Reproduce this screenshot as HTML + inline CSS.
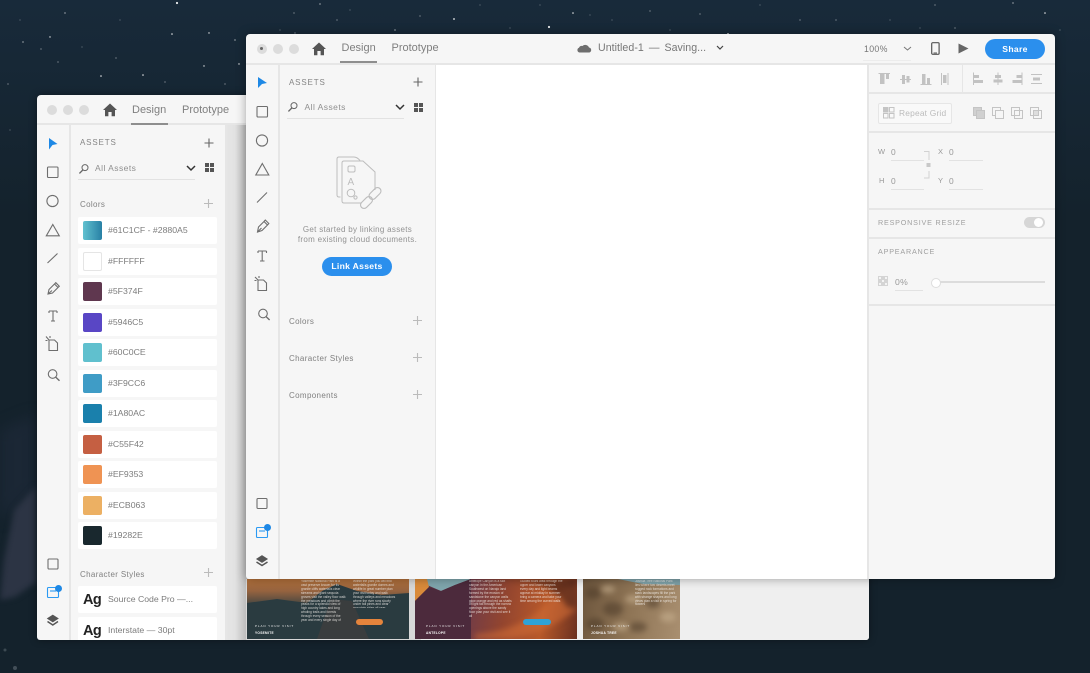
<!DOCTYPE html>
<html><head><meta charset="utf-8">
<style>
html,body{margin:0;padding:0}
body{width:1090px;height:673px;overflow:hidden;position:relative;background:#14222c;font-family:"Liberation Sans",sans-serif;color:#8a8a8a}
.a{position:absolute}
.t{position:absolute;white-space:nowrap;line-height:12px}
svg{position:absolute;overflow:visible}
.win{position:absolute;background:#f6f6f6;border-radius:4px 4px 3px 3px;overflow:hidden}
.dot{position:absolute;width:10px;height:10px;border-radius:50%;background:#dcdcdc}
.row{position:absolute;left:41px;width:139px;height:27px;background:#fff;border-radius:2px}
.sw{position:absolute;left:5px;top:4px;width:19px;height:19px;border-radius:2px}
.row span{position:absolute;left:30px;top:7px;font-size:8.7px;line-height:12px;letter-spacing:0;color:#7c7c7c;white-space:nowrap}
.ag{position:absolute;left:5px;top:5px;font-size:14.5px;line-height:18px;font-weight:bold;letter-spacing:-.6px;color:#222}
.tab{font-size:11px;letter-spacing:0;color:#7f7f7f}
.lb{font-size:8px;letter-spacing:.35px;color:#808080}
.cap{font-size:8px;letter-spacing:.85px;color:#858585}
.p{position:absolute;font-size:3.2px;line-height:3.9px;color:rgba(244,240,236,.8);overflow:hidden}
.l1{position:absolute;font-size:3px;letter-spacing:.9px;color:#eee;white-space:nowrap}
.l2{position:absolute;font-size:3.2px;font-weight:bold;letter-spacing:.3px;color:#fff;white-space:nowrap}
.ln{position:absolute;height:1px;background:#e2e2e2}
.rt{font-size:8.4px;color:#999;letter-spacing:.3px}
</style></head><body>

<svg width="1090" height="673" style="left:0;top:0" fill="#fff">
<defs>
<filter id="b1" color-interpolation-filters="sRGB" x="-30%" y="-30%" width="160%" height="160%"><feGaussianBlur stdDeviation="3"/></filter>
<filter id="b3" color-interpolation-filters="sRGB" x="-30%" y="-30%" width="160%" height="160%"><feGaussianBlur stdDeviation="7"/></filter>
<linearGradient id="top" x1="0" y1="0" x2="0" y2="1"><stop offset="0" stop-color="#182a3a"/><stop offset="1" stop-color="#14222c"/></linearGradient>
</defs>
<rect width="1090" height="220" fill="url(#top)"/>
<path d="M0 430 L36 415 V490 L0 520Z" fill="#1b2735" filter="url(#b3)"/>
<path d="M4 560 L14 510 L36 486 V582 L15 597 L0 600Z" fill="#2c3444" filter="url(#b1)"/>
<g fill="#9aa4ac"><circle cx="5" cy="650" r="1.500" opacity=".3"/><circle cx="15" cy="668" r="2" opacity=".35"/></g>
<g opacity=".9">
<circle cx="177" cy="3" r="1.100"/><circle cx="65" cy="13" r=".6"/><circle cx="50" cy="37" r=".7"/><circle cx="172" cy="34" r=".8"/><circle cx="209" cy="33" r=".7"/><circle cx="235" cy="40" r=".6"/><circle cx="23" cy="42" r=".6"/><circle cx="41" cy="49" r=".5"/><circle cx="58" cy="62" r=".5"/><circle cx="101" cy="76" r=".8"/><circle cx="143" cy="75" r=".8"/><circle cx="204" cy="66" r=".7"/><circle cx="239" cy="64" r=".7"/><circle cx="116" cy="58" r=".5"/><circle cx="82" cy="47" r=".4"/><circle cx="20" cy="20" r=".4"/><circle cx="120" cy="20" r=".4"/><circle cx="8" cy="84" r=".5"/><circle cx="165" cy="82" r=".5"/><circle cx="225" cy="84" r=".5"/><circle cx="10" cy="130" r=".4"/>
<circle cx="454" cy="19" r=".9"/><circle cx="549" cy="27" r="1.100"/><circle cx="573" cy="13" r=".8"/><circle cx="728" cy="34" r=".9"/><circle cx="1045" cy="13" r=".8"/><circle cx="989" cy="45" r=".7"/><circle cx="1013" cy="3" r=".6"/><circle cx="320" cy="4" r=".6"/><circle cx="294" cy="13" r=".5"/><circle cx="420" cy="16" r=".5"/><circle cx="395" cy="30" r=".6"/><circle cx="337" cy="20" r=".5"/><circle cx="280" cy="30" r=".4"/><circle cx="295" cy="33" r=".5"/><circle cx="650" cy="11" r=".5"/><circle cx="700" cy="14" r=".5"/><circle cx="760" cy="5" r=".4"/><circle cx="800" cy="20" r=".5"/><circle cx="836" cy="20" r=".5"/><circle cx="890" cy="20" r=".4"/><circle cx="935" cy="5" r=".5"/><circle cx="955" cy="28" r=".5"/><circle cx="920" cy="28" r=".4"/><circle cx="510" cy="28" r=".4"/><circle cx="612" cy="20" r=".4"/><circle cx="670" cy="30" r=".4"/><circle cx="1060" cy="30" r=".4"/><circle cx="350" cy="10" r=".4"/><circle cx="480" cy="5" r=".4"/><circle cx="540" cy="5" r=".4"/><circle cx="590" cy="15" r=".4"/>
</g>
</svg>

<!-- BACK WINDOW -->
<div class="win" style="left:37px;top:95px;width:832px;height:545px;box-shadow:0 0 8px rgba(0,0,0,.4)">
  <div class="a" style="left:0;top:0;width:832px;height:30px;border-bottom:2px solid #e6e6e6;box-sizing:border-box"></div>
  <div class="dot" style="left:10px;top:10px"></div><div class="dot" style="left:26px;top:10px"></div><div class="dot" style="left:42px;top:10px"></div>
  <svg style="left:66px;top:8px" width="14" height="14" viewBox="0 0 14 14"><path d="M7 .5 L14 7 L12 7 L12 13.200 L8.600 13.200 L8.600 9 L5.400 9 L5.400 13.200 L2 13.200 L2 7 L0 7Z" fill="#555"/></svg>
  <div class="t tab" style="left:95px;top:8.500px">Design</div>
  <div class="a" style="left:94px;top:28px;width:37px;height:2px;background:#8e8e8e"></div>
  <div class="t tab" style="left:145px;top:8.500px">Prototype</div>

  <div class="a" style="left:32px;top:30px;width:2px;height:515px;background:#e6e6e6"></div>
  <div class="a" style="left:34px;top:30px;width:154px;height:515px;background:#f6f6f6"></div>
  <div class="a" style="left:188px;top:30px;width:644px;height:515px;background:linear-gradient(90deg,#e6e6e6 0,#e2e2e2 10px,#bdbdbd 21px,#bdbdbd 22px)"></div>

  <svg style="left:0;top:0" width="33" height="545" fill="none" stroke="#6e6e6e" stroke-width="1.100">
    <path d="M12 43 L20.500 49 L15.500 50 L12 54.500Z" fill="#1e88e5" stroke="none"/>
    <rect x="10.500" y="72" width="10.500" height="10.500" rx="1"/>
    <circle cx="15.500" cy="106" r="5.600"/>
    <path d="M15.800 129.500 L22.300 140.800 L9.300 140.800Z"/>
    <path d="M10.500 168 L20.500 158.500"/>
    <path d="M11 199 L12 194.500 L17.500 189 L21 192.500 L15.500 198 Z M11 199 L15 195.500 M17.500 189 L18.800 187.700 L22.300 191.200 L21 192.500"/>
    <path d="M12 216 H20 M16 216 V226 M14 226 H18 M12 216 V218 M20 216 V218"/>
    <path d="M12 245 H17.500 L20.500 248 V255.500 H12Z M9 241.500 L12 245 M13 241 V243 M8.500 245.500 H10.500"/>
    <circle cx="15.600" cy="279" r="4.300"/><path d="M18.800 282.200 L22.500 285.800" stroke-width="1.400"/>
    <rect x="11" y="464" width="10" height="10" rx="1"/>
    <rect x="10.500" y="492.500" width="11" height="10" rx="1" stroke="#2b9af3"/><path d="M13 496 H19" stroke="#2b9af3"/>
    <path d="M15.800 520 L21.300 523.500 L15.800 527 L10.300 523.500Z" fill="#555" stroke="#555" stroke-width=".6"/><path d="M10.500 526.500 L15.800 530 L21 526.500" stroke="#555" stroke-width="1.500"/>
  </svg>
  <div class="a" style="left:18px;top:490px;width:7px;height:7px;border-radius:50%;background:#1e88e5"></div>

  <div class="t cap" style="left:43px;top:42px">ASSETS</div>
  <svg style="left:167px;top:43px" width="10" height="10"><path d="M5 .5 V9.500 M.5 5 H9.500" stroke="#666" stroke-width="1.100"/></svg>
  <svg style="left:41px;top:68px" width="12" height="12" fill="none" stroke="#666"><circle cx="7" cy="4.600" r="3"/><path d="M4.800 7 L1.400 10.400" stroke-width="1.300"/></svg>
  <div class="t lb" style="left:58px;top:67px;font-size:8.500px;color:#8f8f8f;letter-spacing:.45px">All Assets</div>
  <svg style="left:149px;top:70px" width="10" height="7" fill="none"><path d="M1 1 L5 5 L9 1" stroke="#333" stroke-width="1.500"/></svg>
  <div class="a" style="left:168px;top:68px;width:3.500px;height:3.500px;background:#555;box-shadow:5px 0 #555,0 5px #555,5px 5px #555"></div>
  <div class="ln" style="left:41px;top:84px;width:117px"></div>
  <div class="t lb" style="left:43px;top:104px">Colors</div>
  <svg style="left:167px;top:104px" width="10" height="10"><path d="M4.500 0 V9 M0 4.500 H9" stroke="#bbb" stroke-width="1.100"/></svg>

  <div class="row" style="top:122px"><div class="sw" style="background:linear-gradient(90deg,#61c1cf,#2880a5)"></div><span>#61C1CF - #2880A5</span></div>
  <div class="row" style="top:152.500px"><div class="sw" style="background:#fff;box-shadow:inset 0 0 0 1px #e5e5e5"></div><span>#FFFFFF</span></div>
  <div class="row" style="top:183px"><div class="sw" style="background:#5f374f"></div><span>#5F374F</span></div>
  <div class="row" style="top:213.500px"><div class="sw" style="background:#5946c5"></div><span>#5946C5</span></div>
  <div class="row" style="top:244px"><div class="sw" style="background:#60c0ce"></div><span>#60C0CE</span></div>
  <div class="row" style="top:274.500px"><div class="sw" style="background:#3f9cc6"></div><span>#3F9CC6</span></div>
  <div class="row" style="top:305px"><div class="sw" style="background:#1a80ac"></div><span>#1A80AC</span></div>
  <div class="row" style="top:335.500px"><div class="sw" style="background:#c55f42"></div><span>#C55F42</span></div>
  <div class="row" style="top:366px"><div class="sw" style="background:#ef9353"></div><span>#EF9353</span></div>
  <div class="row" style="top:396.500px"><div class="sw" style="background:#ecb063"></div><span>#ECB063</span></div>
  <div class="row" style="top:427px"><div class="sw" style="background:#19282e"></div><span>#19282E</span></div>

  <div class="t lb" style="left:43px;top:474px">Character Styles</div>
  <svg style="left:167px;top:473px" width="10" height="10"><path d="M4.500 0 V9 M0 4.500 H9" stroke="#bbb" stroke-width="1.100"/></svg>
  <div class="row" style="top:491px"><div class="ag">Ag</div><span>Source Code Pro —...</span></div>
  <div class="row" style="top:521.500px"><div class="ag">Ag</div><span>Interstate — 30pt</span></div>

  <div class="a" style="left:209px;top:484px;width:623px;height:61px;background:#efefef"></div>
  <div class="a" style="left:209px;top:484px;width:175px;height:61px;background:#d8d8d8"></div>
  <div class="a" style="left:210px;top:484px;width:162px;height:60px;overflow:hidden;background:linear-gradient(180deg,#b2703a 0,#96633f 20%,#2c3d42 50%,#22343a 100%)">
    <svg style="left:0;top:0" width="162" height="60"><path d="M0 24 L30 20 L60 24 L75 12 L90 5 L110 12 L135 16 L162 14 V60 H0Z" fill="#2a3b40"/><path d="M70 60 L84 20 L105 22 L122 60Z" fill="#3a3d3e"/></svg>
    <div class="p" style="left:54px;top:1px;width:45px;height:42px">Yosemite National Park is a vast preserve known for its granite cliffs waterfalls clear streams and giant sequoia groves visit the valley floor walk the meadows and climb the peaks for a splendid view of high country lakes and long winding trails and forests through every season of the year and every single day of the long and bright and warm summer when the falls run strong and the trails are open</div>
    <div class="p" style="left:106px;top:1px;width:44px;height:28px">Within the park you will find waterfalls granite domes and wildlife in great number plan your visit today and walk through valleys and meadows where the river runs slowly under tall pines and clear mountain skies all year</div>
    <div class="a" style="left:109px;top:40px;width:27px;height:6px;border-radius:3px;background:#e5843c"></div>
    <div class="l1" style="left:8px;top:45px">PLAN YOUR VISIT</div><div class="l2" style="left:8px;top:52px">YOSEMITE</div>
  </div>
  <div class="a" style="left:378px;top:484px;width:162px;height:60px;overflow:hidden;background:linear-gradient(100deg,#57303f 0,#6b3a4b 30%,#93452f 55%,#b8592a 78%,#6a3020 100%)">
    <svg style="left:0;top:0" width="162" height="60"><path d="M10 0 H56 L40 6 L26 12 L12 6Z" fill="#7fa6ad"/><path d="M0 0 H12 L14 8 L0 22Z" fill="#d98a3a"/><path d="M0 22 L14 8 L26 12 L40 6 L56 0 V60 H0Z" fill="#4c2a3c"/><g filter="url(#b1)"><path d="M60 55 Q110 52 135 20 Q148 8 162 6 V30 Q130 55 95 60 H60Z" fill="#cf6a35" opacity=".6"/><path d="M100 0 Q140 5 152 28 L162 30 V0Z" fill="#4c2418" opacity=".65"/></g></svg>
    <div class="p" style="left:54px;top:1px;width:44px;height:42px">Antelope Canyon is a slot canyon in the American Southwest on Navajo land formed by the erosion of sandstone the canyon walls glow orange and red as shafts of light fall through the narrow openings above the sandy floor plan your visit and see it all</div>
    <div class="p" style="left:105px;top:1px;width:44px;height:28px">Guided tours walk through the upper and lower canyons every day and light beams appear at midday in summer bring a camera and take your time among the curved walls</div>
    <div class="a" style="left:108px;top:40px;width:28px;height:6px;border-radius:3px;background:#2fa2d6"></div>
    <div class="l1" style="left:11px;top:45px">PLAN YOUR VISIT</div><div class="l2" style="left:11px;top:52px">ANTELOPE</div>
  </div>
  <div class="a" style="left:546px;top:484px;width:97px;height:60px;overflow:hidden;background:linear-gradient(100deg,#6d563d 0,#8f7556 50%,#a98f70 100%)">
    <svg style="left:0;top:0" width="97" height="60"><path d="M35 0 H97 V6 L60 5 Z" fill="#7ea1a8"/><g fill="#4d3b29" opacity=".55" filter="url(#b1)"><ellipse cx="10" cy="14" rx="8" ry="6"/><ellipse cx="30" cy="30" rx="10" ry="7"/><ellipse cx="12" cy="45" rx="9" ry="6"/><ellipse cx="55" cy="48" rx="9" ry="5"/><ellipse cx="70" cy="24" rx="7" ry="5"/></g><g fill="#c7b08f" opacity=".6" filter="url(#b1)"><ellipse cx="25" cy="10" rx="7" ry="4"/><ellipse cx="50" cy="20" rx="8" ry="4"/><ellipse cx="85" cy="38" rx="8" ry="5"/><ellipse cx="38" cy="48" rx="8" ry="4"/></g></svg>
    <div class="p" style="left:52px;top:1px;width:43px">Joshua Tree National Park lies where two deserts meet rugged rock formations and stark landscapes fill the park with strange shapes and long views plan a visit in spring for flowers</div>
    <div class="l1" style="left:8px;top:45px">PLAN YOUR VISIT</div><div class="l2" style="left:8px;top:52px">JOSHUA TREE</div>
  </div>
</div>

<!-- FRONT WINDOW -->
<div class="win" style="left:246px;top:34px;width:809px;height:545px;box-shadow:0 0 10px rgba(0,0,0,.35)">
  <div class="a" style="left:0;top:0;width:809px;height:31px;border-bottom:2px solid #e6e6e6;box-sizing:border-box"></div>
  <div class="dot" style="left:10.500px;top:9.500px"></div><div class="dot" style="left:26.500px;top:9.500px"></div><div class="dot" style="left:42.500px;top:9.500px"></div>
  <div class="a" style="left:14px;top:13px;width:3px;height:3px;border-radius:50%;background:#666"></div>
  <svg style="left:66px;top:8px" width="14" height="14" viewBox="0 0 14 14"><path d="M7 .5 L14 7 L12 7 L12 13.200 L8.600 13.200 L8.600 9 L5.400 9 L5.400 13.200 L2 13.200 L2 7 L0 7Z" fill="#555"/></svg>
  <div class="t tab" style="left:95.500px;top:8px">Design</div>
  <div class="a" style="left:94px;top:27px;width:37px;height:2px;background:#8e8e8e"></div>
  <div class="t tab" style="left:145.500px;top:8px">Prototype</div>

  <svg style="left:331px;top:9px" width="15" height="10"><path d="M2.500 9.500 A2.500 2.500 0 0 1 2 4.700 A3 3 0 0 1 5.500 3 A4 4 0 0 1 12 4.500 A2.600 2.600 0 0 1 12.500 9.500Z" fill="#6e6e6e"/></svg>
  <div class="t" style="left:352px;top:8px;font-size:10.600px;letter-spacing:.05px;color:#777;word-spacing:2px">Untitled-1 — Saving...</div>
  <svg style="left:470px;top:11px" width="8" height="6" fill="none"><path d="M1 1 L4 4 L7 1" stroke="#444" stroke-width="1.200"/></svg>

  <div class="t" style="left:618px;top:9px;font-size:8.800px;letter-spacing:.3px;color:#777">100%</div>
  <svg style="left:657px;top:12px" width="9" height="6" fill="none"><path d="M1 1 L4.500 4 L8 1" stroke="#777"/></svg>
  <div class="ln" style="left:617px;top:26px;width:48px;background:#ececec"></div>
  <svg style="left:685px;top:8px" width="9" height="13" fill="none"><rect x=".7" y=".7" width="7.400" height="11.600" rx="1" stroke="#555" stroke-width="1.200"/><path d="M2.500 11 H6" stroke="#555"/></svg>
  <svg style="left:712px;top:9px" width="11" height="11"><path d="M.5 .5 L10.500 5.500 L.5 10.500Z" fill="#666"/></svg>
  <div class="a" style="left:739px;top:5px;width:60px;height:20px;border-radius:10px;background:#2b8fed;color:#fff;font-size:8.600px;font-weight:bold;text-align:center;line-height:20px;letter-spacing:.3px">Share</div>

  <div class="a" style="left:32px;top:31px;width:2px;height:514px;background:#e6e6e6"></div>
  <div class="a" style="left:189px;top:31px;width:2px;height:514px;background:#e6e6e6"></div>
  <div class="a" style="left:190px;top:31px;width:431px;height:514px;background:#fff"></div>
  <div class="a" style="left:621px;top:31px;width:2px;height:514px;background:#e6e6e6"></div>

  <svg style="left:0;top:0" width="33" height="545" fill="none" stroke="#6e6e6e" stroke-width="1.100">
    <path d="M12 43 L21 49 L16 50 L12 54Z" fill="#1e88e5" stroke="none"/>
    <rect x="11" y="72.500" width="10.500" height="10.500" rx="1"/>
    <circle cx="16" cy="106.500" r="5.600"/>
    <path d="M16.300 129.500 L22.800 141 L9.800 141Z"/>
    <path d="M11 168.500 L21 158.500"/>
    <path d="M11.500 198 L12.500 193 L18 187.500 L21.500 191 L16 196.500 Z M11.500 198 L15.500 194 M18 187.500 L19.300 186 L22.800 189.500 L21.500 191"/>
    <path d="M12 217 H20.500 M16.200 217 V227 M14 227 H18.500 M12 217 V219 M20.500 217 V219"/>
    <path d="M12 246 H17.500 L20.500 249 V256.500 H12Z M9 243 L12 246 M13 242 V244 M8.500 246.500 H10.500"/>
    <circle cx="17" cy="279.500" r="4.300"/><path d="M20.200 282.700 L23.600 286" stroke-width="1.400"/>
    <rect x="11" y="464.500" width="10" height="10" rx="1"/>
    <rect x="10.500" y="493.500" width="11" height="10" rx="1" stroke="#2b9af3"/><path d="M13 497 H19" stroke="#2b9af3"/>
    <path d="M16 521.500 L21.500 525 L16 528.500 L10.500 525Z" fill="#555" stroke="#555" stroke-width=".6"/><path d="M10.500 528 L16 531.500 L21.500 528" stroke="#555" stroke-width="1.500"/>
  </svg>
  <div class="a" style="left:18px;top:490px;width:7px;height:7px;border-radius:50%;background:#1e88e5"></div>

  <div class="t cap" style="left:43px;top:42.500px">ASSETS</div>
  <svg style="left:167px;top:43px" width="10" height="10"><path d="M5 .5 V9.500 M.5 5 H9.500" stroke="#666" stroke-width="1.100"/></svg>
  <svg style="left:41px;top:67px" width="12" height="12" fill="none" stroke="#666"><circle cx="7" cy="4.600" r="3"/><path d="M4.800 7 L1.400 10.400" stroke-width="1.300"/></svg>
  <div class="t lb" style="left:58.500px;top:67px;font-size:8.500px;color:#8f8f8f;letter-spacing:.45px">All Assets</div>
  <svg style="left:149px;top:70px" width="10" height="7" fill="none"><path d="M1 1 L5 5 L9 1" stroke="#333" stroke-width="1.500"/></svg>
  <div class="a" style="left:168px;top:69px;width:3.500px;height:3.500px;background:#555;box-shadow:5px 0 #555,0 5px #555,5px 5px #555"></div>
  <div class="ln" style="left:41px;top:84px;width:117px"></div>

  <svg style="left:90px;top:122px" width="46" height="54" fill="none" stroke="#bdbdbd" stroke-width="1">
    <path d="M4.500 41 H3 Q1 41 1 39 V3 Q1 1 3 1 H18 Q21 1 24 4.500"/>
    <path d="M25 47 H8 Q6 47 6 45 V7 Q6 5 8 5 H27 L39 16 V34"/>
    <rect x="12" y="10" width="7" height="6" rx="1.500"/>
    <text x="11.500" y="29" font-size="10" fill="#bdbdbd" stroke="none" font-family="Liberation Sans">A</text>
    <circle cx="15" cy="37" r="3.800"/><circle cx="19.500" cy="41.500" r="1.600"/>
    <rect x="23.500" y="43" width="14" height="7" rx="3.500" transform="rotate(-45 30.500 46.500)" stroke-width="1.100"/>
    <rect x="32" y="34" width="14" height="7" rx="3.500" transform="rotate(-45 39 37.500)" stroke-width="1.100"/>
  </svg>
  <div class="t" style="left:34px;top:191px;width:155px;text-align:center;font-size:8px;line-height:10.400px;letter-spacing:.3px;color:#929292;white-space:normal">Get started by linking assets<br>from existing cloud documents.</div>
  <div class="a" style="left:76px;top:223px;width:70px;height:19px;border-radius:10px;background:#2b8fed;color:#fff;font-size:8.600px;font-weight:bold;text-align:center;line-height:19px;letter-spacing:.3px">Link Assets</div>

  <div class="t lb" style="left:43px;top:282px">Colors</div>
  <svg style="left:167px;top:282px" width="10" height="10"><path d="M4.500 0 V9 M0 4.500 H9" stroke="#bbb" stroke-width="1.100"/></svg>
  <div class="t lb" style="left:43px;top:319px">Character Styles</div>
  <svg style="left:167px;top:319px" width="10" height="10"><path d="M4.500 0 V9 M0 4.500 H9" stroke="#bbb" stroke-width="1.100"/></svg>
  <div class="t lb" style="left:43px;top:356px">Components</div>
  <svg style="left:167px;top:356px" width="10" height="10"><path d="M4.500 0 V9 M0 4.500 H9" stroke="#bbb" stroke-width="1.100"/></svg>

  <!-- right panel -->
  <div class="a" style="left:623px;top:58px;width:186px;height:2px;background:#e6e6e6"></div>
  <div class="a" style="left:716px;top:31px;width:1px;height:27px;background:#e6e6e6"></div>
  <svg style="left:630px;top:36px" width="175" height="20" fill="#c2c2c2" stroke="none">
    <path d="M2.500 3 H14 V4 H2.500Z M4 4 H8.500 V14 H4Z M10 4 H13 V9 H10Z"/>
    <path d="M24 9 H35 V10 H24Z M26 5 H29 V14 H26Z M30.500 6 H33.500 V12.500 H30.500Z"/>
    <path d="M44.500 14 H55.500 V15 H44.500Z M46 4 H49.500 V14 H46Z M51 8 H54 V14 H51Z"/>
    <path d="M65 3 H66 V15 H65Z M71.500 3 H72.500 V15 H71.500Z M67 5 H70.500 V13 H67Z"/>
    <path d="M97 2.500 H98 V15 H97Z M98 5 H103 V8 H98Z M98 10 H107 V13 H98Z"/>
    <path d="M121.500 2.500 H122.500 V15 H121.500Z M119 5 H125 V8 H119Z M117.500 9.500 H126.500 V12.500 H117.500Z"/>
    <path d="M145.500 2.500 H146.500 V15 H145.500Z M140.500 5 H145.500 V8 H140.500Z M136.500 10 H145.500 V13 H136.500Z"/>
    <path d="M155 4 H166 V5 H155Z M155 13 H166 V14 H155Z M157 7.500 H164 V10.500 H157Z"/>
  </svg>
  <div class="a" style="left:632px;top:69px;width:72px;height:19px;border:1px solid #e6e6e6;border-radius:2px;background:#f9f9f9"></div>
  <svg style="left:637px;top:73px" width="12" height="12" fill="none" stroke="#c4c4c4"><rect x=".5" y=".5" width="4.500" height="4.500" fill="#c4c4c4"/><rect x="6.500" y=".5" width="4.500" height="4.500"/><rect x=".5" y="6.500" width="4.500" height="4.500"/><rect x="6.500" y="6.500" width="4.500" height="4.500"/></svg>
  <div class="t rt" style="left:653px;top:73px;letter-spacing:.2px;color:#bbb">Repeat Grid</div>
  <svg style="left:727px;top:73px" width="70" height="14" fill="none" stroke="#c4c4c4">
    <rect x=".5" y=".5" width="8" height="8" fill="#d0d0d0"/><rect x="3.500" y="3.500" width="8" height="8" fill="#d0d0d0"/>
    <rect x="19.500" y=".5" width="8" height="8"/><rect x="22.500" y="3.500" width="8" height="8" fill="#f6f6f6"/>
    <rect x="38.500" y=".5" width="8" height="8"/><rect x="41.500" y="3.500" width="8" height="8"/>
    <rect x="57.500" y=".5" width="8" height="8"/><rect x="60.500" y="3.500" width="8" height="8"/><rect x="60.500" y="3.500" width="5" height="5" fill="#ddd"/>
  </svg>
  <div class="a" style="left:623px;top:97px;width:186px;height:2px;background:#e6e6e6"></div>

  <div class="t rt" style="left:632px;top:112px;font-size:7.500px">W</div><div class="t rt" style="left:645px;top:112px">0</div><div class="ln" style="left:645px;top:126px;width:33px"></div>
  <div class="t rt" style="left:692px;top:112px;font-size:7.500px">X</div><div class="t rt" style="left:703px;top:112px">0</div><div class="ln" style="left:703px;top:126px;width:34px"></div>
  <div class="t rt" style="left:633px;top:141px;font-size:7.500px">H</div><div class="t rt" style="left:645px;top:141px">0</div><div class="ln" style="left:645px;top:155px;width:33px"></div>
  <div class="t rt" style="left:692px;top:141px;font-size:7.500px">Y</div><div class="t rt" style="left:703px;top:141px">0</div><div class="ln" style="left:703px;top:155px;width:34px"></div>
  <svg style="left:678px;top:117px" width="10" height="30" fill="none" stroke="#d2d2d2"><path d="M0 .5 H5 V9 M5 20 V27 H0"/><rect x="2.500" y="12" width="4" height="4" fill="#c8c8c8" stroke="none"/></svg>
  <div class="a" style="left:623px;top:174px;width:186px;height:2px;background:#e6e6e6"></div>
  <div class="t cap" style="left:632px;top:183px;font-size:7.200px;letter-spacing:.8px;color:#a0a0a0">RESPONSIVE RESIZE</div>
  <div class="a" style="left:778px;top:183px;width:21px;height:11px;border-radius:6px;background:#d6d6d6"></div>
  <div class="a" style="left:788px;top:184px;width:9px;height:9px;border-radius:50%;background:#fff"></div>
  <div class="a" style="left:623px;top:203px;width:186px;height:2px;background:#e6e6e6"></div>
  <div class="t cap" style="left:632px;top:212px;font-size:7.200px;letter-spacing:.8px;color:#a0a0a0">APPEARANCE</div>
  <svg style="left:632px;top:242px" width="11" height="11"><rect width="10" height="10" fill="#d4d4d4"/><g fill="#f4f4f4"><rect x="1" y="1" width="2" height="2"/><rect x="7" y="1" width="2" height="2"/><rect x="4" y="4" width="2" height="2"/><rect x="1" y="7" width="2" height="2"/><rect x="7" y="7" width="2" height="2"/></g></svg>
  <div class="t rt" style="left:649px;top:242px;font-size:8.600px">0%</div>
  <div class="ln" style="left:649px;top:256px;width:28px"></div>
  <div class="a" style="left:690px;top:247px;width:109px;height:2px;background:#dcdcdc"></div>
  <div class="a" style="left:685px;top:244px;width:8px;height:8px;border-radius:50%;background:#fff;border:.5px solid #ddd"></div>
  <div class="a" style="left:623px;top:270px;width:186px;height:2px;background:#e6e6e6"></div>
</div>
</body></html>
